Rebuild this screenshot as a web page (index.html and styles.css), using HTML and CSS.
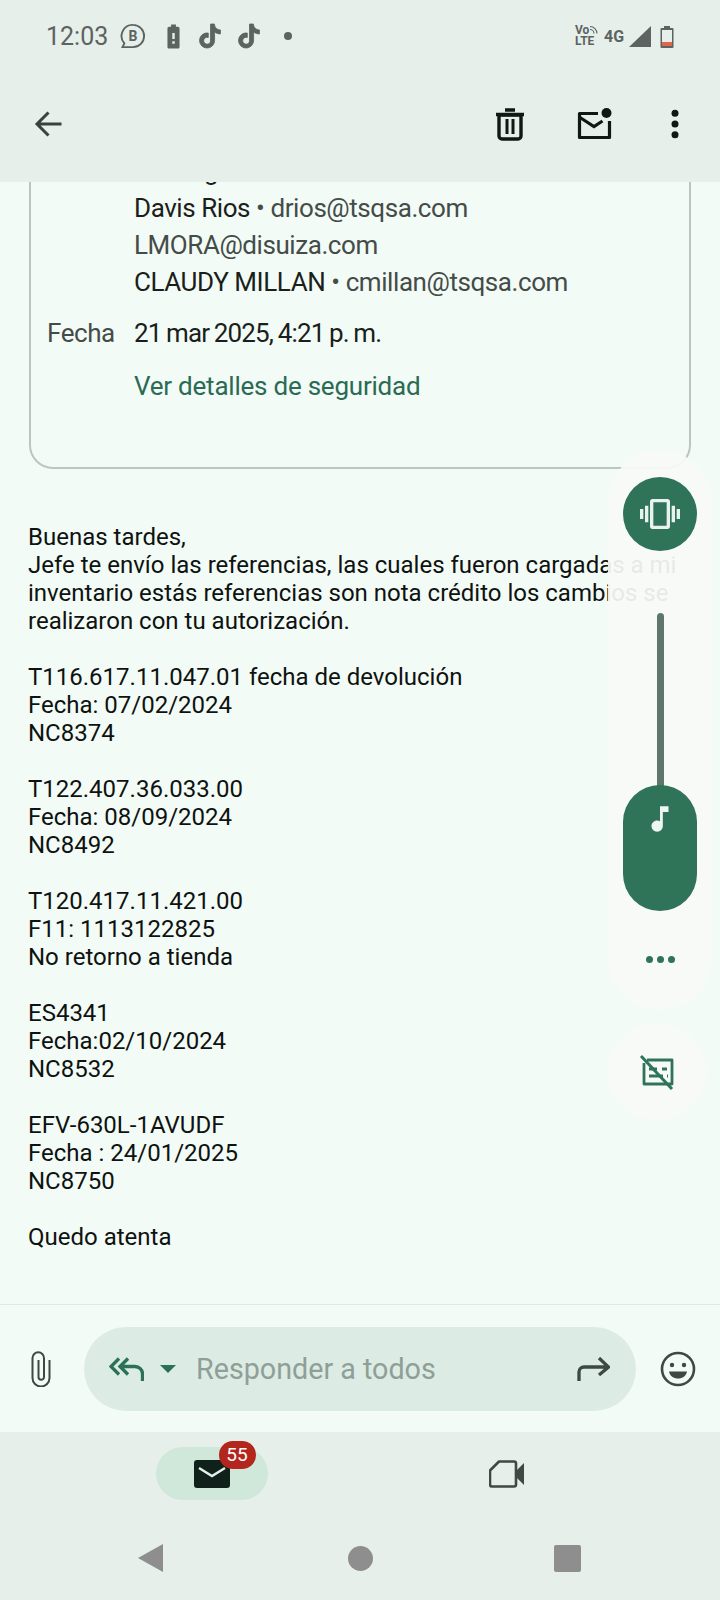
FILE: index.html
```html
<!DOCTYPE html>
<html lang="es">
<head>
    <meta charset="UTF-8">
    <meta name="viewport" content="width=device-width, initial-scale=1.0">
    <title>Correo</title>
    <link rel="stylesheet" href="styles.css">
</head>
<body>
    <div id="page">
        <div id="top">
            <div id="status">
                <span id="clock">12:03</span>
                <svg class="st-b" viewBox="0 0 24 24"><path d="M12 2.500a9.500 9.500 0 0 1 0 19H3l1.600-3.200A9.500 9.500 0 0 1 12 2.500z" fill="none" stroke="#5c6360" stroke-width="1.600"/><text x="12" y="16.500" text-anchor="middle" class="st-b-text">B</text></svg>
                <svg class="st-batt" viewBox="0 0 24 24"><path d="M15.670 4H14V2h-4v2H8.330C7.600 4 7 4.600 7 5.330v15.330C7 21.400 7.600 22 8.330 22h7.330c.74 0 1.340-.6 1.340-1.330V5.330C17 4.600 16.400 4 15.670 4zM13 18h-2v-2h2v2zm0-4h-2V9h2v5z"/></svg>
                <svg class="st-tt" viewBox="0 0 24 24"><path d="M12.525.02c1.310-.02 2.610-.01 3.910-.02.08 1.530.63 3.090 1.750 4.170 1.120 1.110 2.700 1.620 4.240 1.790v4.030c-1.440-.05-2.890-.35-4.200-.97-.57-.26-1.100-.59-1.620-.93-.01 2.920.01 5.840-.02 8.750-.08 1.400-.54 2.790-1.350 3.940-1.310 1.920-3.580 3.170-5.910 3.210-1.430.08-2.860-.31-4.080-1.030-2.020-1.190-3.440-3.370-3.650-5.710-.02-.5-.03-1-.01-1.490.18-1.900 1.120-3.720 2.580-4.960 1.660-1.440 3.980-2.130 6.150-1.720.02 1.480-.04 2.960-.04 4.440-.99-.32-2.150-.23-3.020.37-.63.41-1.110 1.040-1.360 1.750-.21.51-.15 1.070-.14 1.610.24 1.640 1.820 3.020 3.500 2.870 1.120-.01 2.190-.66 2.770-1.610.19-.33.4-.67.41-1.060.1-1.790.06-3.570.07-5.360.01-4.030-.01-8.050.02-12.070z"/></svg>
                <svg class="st-tt" viewBox="0 0 24 24"><path d="M12.525.02c1.310-.02 2.610-.01 3.910-.02.08 1.530.63 3.090 1.750 4.170 1.120 1.110 2.700 1.620 4.240 1.790v4.030c-1.440-.05-2.890-.35-4.200-.97-.57-.26-1.100-.59-1.620-.93-.01 2.920.01 5.840-.02 8.750-.08 1.400-.54 2.790-1.350 3.940-1.310 1.920-3.580 3.170-5.910 3.210-1.430.08-2.860-.31-4.080-1.030-2.020-1.190-3.440-3.370-3.650-5.710-.02-.5-.03-1-.01-1.490.18-1.900 1.120-3.720 2.580-4.960 1.660-1.440 3.980-2.130 6.150-1.720.02 1.480-.04 2.960-.04 4.440-.99-.32-2.150-.23-3.020.37-.63.41-1.110 1.040-1.360 1.750-.21.51-.15 1.070-.14 1.610.24 1.640 1.820 3.020 3.500 2.870 1.120-.01 2.190-.66 2.770-1.610.19-.33.4-.67.41-1.060.1-1.790.06-3.570.07-5.360.01-4.030-.01-8.050.02-12.070z"/></svg>
                <span id="st-dot"></span>
                <div id="status-right">
                    <div id="volte">
                        <span>Vo</span><span>LTE</span>
                        <svg id="volte-waves" viewBox="0 0 10 10"><path d="M1 1.500a7 7 0 0 1 7 7M1 4.500a4 4 0 0 1 4 4" fill="none" stroke="#5c6360" stroke-width="1.100"/></svg>
                    </div>
                    <span id="net">4G</span>
                    <svg id="signal" viewBox="0 0 22 21"><path d="M22 0v21H0z"/></svg>
                    <svg id="battery" viewBox="0 0 14 23"><path d="M4 1h6v2h2.500a1 1 0 0 1 1 1v18a1 1 0 0 1-1 1h-11a1 1 0 0 1-1-1V4a1 1 0 0 1 1-1H4z" fill="#5c6360"/><rect x="2" y="5" width="10" height="12" fill="#e7efeb"/><rect x="2" y="17" width="10" height="4" fill="#e2664a"/></svg>
                </div>
            </div>
            <div id="appbar">
                <svg id="back" viewBox="0 0 28 28"><path d="M27 14H3M14 2.500 2.500 14 14 25.500" fill="none" stroke="#38423f" stroke-width="3"/></svg>
                <div id="actions">
                    <svg class="act act-del" viewBox="0 0 42 42"><path d="M10 12h22v21a3 3 0 0 1-3 3H13a3 3 0 0 1-3-3z" fill="none" stroke="#111715" stroke-width="3.400"/><path d="M7 11.500h28M16 7h10" fill="none" stroke="#111715" stroke-width="3.400"/><path d="M16.500 16h3v15h-3zM22.500 16h3v15h-3z"/></svg>
                    <svg class="act" viewBox="0 0 42 42"><path d="M25 10.500H6.500v24h30V18" fill="none" stroke="#111715" stroke-width="3.200" stroke-linejoin="round"/><path d="m7 14.500 14 9 8.500-5.500" fill="none" stroke="#111715" stroke-width="3.200"/><circle cx="33.500" cy="10" r="5"/></svg>
                    <svg class="act" viewBox="0 0 24 24"><circle cx="12" cy="5.800" r="2"/><circle cx="12" cy="12" r="2"/><circle cx="12" cy="18.200" r="2"/></svg>
                </div>
            </div>
        </div>

        <div id="mail">
            <div id="card">
                <div class="row cut"><span class="value">g</span></div>
                <div class="row"><span class="value">Davis Rios <span class="sub">• drios@tsqsa.com</span></span></div>
                <div class="row"><span class="value sub">LMORA@disuiza.com</span></div>
                <div class="row"><span class="value">CLAUDY MILLAN <span class="sub">• cmillan@tsqsa.com</span></span></div>
                <div class="row date"><span class="label">Fecha</span><span class="value when">21 mar 2025, 4:21 p. m.</span></div>
                <div class="row sec"><span class="value link">Ver detalles de seguridad</span></div>
            </div>
            <div id="body">
                <p>Buenas tardes,<br>Jefe te envío las referencias, las cuales fueron cargadas a mi<br>inventario estás referencias son nota crédito los cambios se<br>realizaron con tu autorización.</p>
                <p>T116.617.11.047.01 fecha de devolución<br>Fecha: 07/02/2024<br>NC8374</p>
                <p>T122.407.36.033.00<br>Fecha: 08/09/2024<br>NC8492</p>
                <p>T120.417.11.421.00<br>F11: 1113122825<br>No retorno a tienda</p>
                <p>ES4341<br>Fecha:02/10/2024<br>NC8532</p>
                <p>EFV-630L-1AVUDF<br>Fecha : 24/01/2025<br>NC8750</p>
                <p>Quedo atenta</p>
            </div>
        </div>

        <div id="compose">
            <svg id="attach" viewBox="0 0 20 36"><path d="M18.500 9v18a8.500 8.500 0 0 1-17 0V7a5.750 5.750 0 0 1 11.500 0v19a2.750 2.750 0 0 1-5.500 0V9" fill="none" stroke="#3e4845" stroke-width="2"/></svg>
            <div id="reply">
                <svg id="reply-all" viewBox="0 0 35 24"><path d="M10 1.500 2 9.500l8 8M19 1.500l-8 8 8 8M11 9.500h15a7.500 7.500 0 0 1 7.500 7.500v7" fill="none" stroke="#2a7155" stroke-width="3.300"/></svg>
                <span id="caret"></span>
                <span id="placeholder">Responder a todos</span>
                <svg id="forward" viewBox="0 0 33 24"><path d="M2 24v-9a5 5 0 0 1 5-5h24M22 1l9.500 9-9.500 8" fill="none" stroke="#3e4845" stroke-width="3.300"/></svg>
            </div>
            <svg id="emoji" viewBox="0 0 36 36"><circle cx="18" cy="18" r="16" fill="none" stroke="#3e4845" stroke-width="2.600"/><circle cx="12" cy="14" r="2.200" fill="#3e4845"/><circle cx="24" cy="14" r="2.200" fill="#3e4845"/><path d="M9 20.500h18c-.8 4.500-4.500 7-9 7s-8.200-2.500-9-7z" fill="#3e4845"/></svg>
        </div>

        <div id="nav">
            <div id="tabs">
                <div class="tab">
                    <div id="mail-pill">
                        <svg id="mail-ico" viewBox="0 0 36 28"><rect width="36" height="28" rx="3" fill="#0f211a"/><path d="m5 8 13 8 13-8" fill="none" stroke="#e4f0ea" stroke-width="2.400"/></svg>
                        <span id="badge">55</span>
                    </div>
                </div>
                <div class="tab">
                    <svg id="video" viewBox="0 0 36 28"><path d="M10 1.500h15a2 2 0 0 1 2 2v21a2 2 0 0 1-2 2H3a2 2 0 0 1-2-2V10.500z" fill="none" stroke="#3e4845" stroke-width="2.600" stroke-linejoin="round"/><path d="M27 11 35 3v22l-8-8z" fill="#3e4845"/></svg>
                </div>
            </div>
            <div id="sysnav">
                <span id="sys-back"></span>
                <span id="sys-home"></span>
                <span id="sys-recent"></span>
            </div>
        </div>

        <!-- panel de volumen, va encima del correo -->
        <div id="volume">
            <div id="ring">
                <svg viewBox="0 0 24 24"><path d="M0 15h2V9H0v6zm3 2h2V7H3v10zm19-8v6h2V9h-2zm-3 8h2V7h-2v10zM16.500 3h-9C6.670 3 6 3.670 6 4.500v15c0 .83.67 1.500 1.500 1.500h9c.83 0 1.500-.67 1.500-1.500v-15c0-.83-.67-1.500-1.500-1.500zM16 19H8V5h8v14z"/></svg>
            </div>
            <div id="track"></div>
            <div id="thumb">
                <svg viewBox="0 0 24 24"><path d="M12 3v10.550c-.59-.34-1.270-.55-2-.55-2.210 0-4 1.790-4 4s1.790 4 4 4 4-1.790 4-4V7h4V3h-6z"/></svg>
            </div>
            <div id="more"><span></span><span></span><span></span></div>
        </div>
        <div id="captions">
            <svg viewBox="0 0 38 36"><path d="M9 6h25v24H6V9" fill="none" stroke="#2f7459" stroke-width="2.800" stroke-linejoin="round"/><path d="M11 15h8M24 15h5M11 22h14M29 22h1" stroke="#2f7459" stroke-width="2.800"/><path d="m3 2 31 33" stroke="#2f7459" stroke-width="3"/></svg>
        </div>
    </div>
</body>
</html>
```

FILE: styles.css
```css
* {
    box-sizing: border-box;
}

body {
    padding: 0;
    margin: 0;
    background-color: #f3fbf6;
    font-family: Roboto, sans-serif;
}

#page {
    position: relative;
    display: flex;
    flex-direction: column;
    width: 720px;
    height: 1600px;
    overflow: hidden;
}

/* barra de arriba */
#top {
    flex: none;
    height: 182px;
    background-color: #e7efeb;
}

#status {
    display: flex;
    align-items: center;
    height: 72px;
    padding-left: 46px;
    padding-right: 46px;
    color: #5c6360;
}

#status svg {
    flex: none;
    fill: #5c6360;
}

#clock {
    font-size: 25px;
    width: 73px;
}

.st-b {
    width: 28px;
    height: 28px;
    margin-right: 12px;
}

.st-b-text {
    font-size: 12px;
    font-weight: 700;
    stroke: none;
}

.st-batt {
    width: 29px;
    height: 29px;
    margin-right: 10px;
}

.st-tt {
    width: 24px;
    height: 26px;
    margin-right: 15px;
    stroke: #5c6360;
    stroke-width: 0.8;
}

#st-dot {
    width: 8px;
    height: 8px;
    margin-left: 8px;
    border-radius: 50%;
    background-color: #5c6360;
}

#status-right {
    display: flex;
    align-items: center;
    margin-left: auto;
}

#volte {
    position: relative;
    display: flex;
    flex-direction: column;
    width: 29px;
    font-size: 12px;
    font-weight: 700;
    line-height: 11px;
}

#volte-waves {
    position: absolute;
    top: 0;
    left: 14px;
    width: 10px;
    height: 10px;
}

#net {
    width: 25px;
    font-size: 16px;
    font-weight: 700;
}

#signal {
    width: 22px;
    height: 21px;
    margin-right: 9px;
}

#battery {
    width: 14px;
    height: 23px;
}

#appbar {
    display: flex;
    align-items: center;
    justify-content: space-between;
    height: 104px;
    padding-left: 34px;
    padding-right: 24px;
}

#back {
    width: 29px;
    height: 28px;
}

#actions {
    display: flex;
    gap: 39px;
}

.act {
    width: 42px;
    height: 42px;
    fill: #111715;
}

.act-del {
    margin-right: 3px;
}

/* correo */
#mail {
    flex: 1;
    min-height: 0;
    overflow: hidden;
}

#card {
    margin: -31px 29px 0;
    padding: 0 0 62px 16px;
    border: 2px solid #bcc5c0;
    border-radius: 0 0 24px 24px;
    font-size: 26px;
    line-height: 37px;
    letter-spacing: -0.43px;
}

.row {
    display: flex;
    padding-left: 87px;
    color: #1a1f1c;
}

.cut {
    padding-left: 157px;
}

.sub {
    color: #444c48;
}

.date {
    margin-top: 14px;
    padding-left: 0;
}

.label {
    width: 87px;
    color: #444c48;
}

.when {
    letter-spacing: -0.86px;
    word-spacing: -1px;
}

.sec {
    margin-top: 16px;
}

.link {
    color: #2a6b54;
    letter-spacing: -0.23px;
}

#body {
    margin-top: 54px;
    padding-left: 28px;
    font-size: 24px;
    line-height: 28px;
    color: #0e1210;
}

#body p {
    margin: 0 0 28px;
    white-space: nowrap;
}

/* responder */
#compose {
    flex: none;
    display: flex;
    align-items: center;
    height: 128px;
    padding-left: 31px;
    border-top: 1px solid #dfe8e3;
}

#attach {
    flex: none;
    width: 20px;
    height: 36px;
}

#reply {
    display: flex;
    align-items: center;
    flex: none;
    width: 552px;
    height: 84px;
    margin-left: 33px;
    margin-right: 24px;
    padding: 0 26px 0 25px;
    border-radius: 42px;
    background-color: #dcebe3;
}

#reply-all {
    flex: none;
    width: 35px;
    height: 24px;
}

#caret {
    flex: none;
    margin-left: 16px;
    border-top: 8px solid #2a7155;
    border-left: 8px solid transparent;
    border-right: 8px solid transparent;
}

#placeholder {
    flex: 1;
    margin-left: 20px;
    font-size: 28.7px;
    color: #8f9f98;
}

#forward {
    flex: none;
    width: 33px;
    height: 24px;
}

#emoji {
    flex: none;
    width: 36px;
    height: 36px;
}

/* abajo */
#nav {
    flex: none;
    height: 168px;
    background-color: #e7efeb;
}

#tabs {
    display: grid;
    grid-template-columns: 1fr 1fr;
    padding: 15px 66px 0 64px;
}

.tab {
    display: flex;
    justify-content: center;
    align-items: center;
    height: 53px;
}

#mail-pill {
    position: relative;
    display: flex;
    justify-content: center;
    align-items: center;
    width: 112px;
    height: 53px;
    border-radius: 27px;
    background-color: #d0e8da;
}

#mail-ico {
    width: 36px;
    height: 28px;
}

#video {
    width: 36px;
    height: 28px;
}

#badge {
    position: absolute;
    top: -6px;
    left: 63px;
    width: 37px;
    height: 28px;
    border-radius: 14px;
    background-color: #b3261e;
    color: #fff;
    font-size: 19px;
    line-height: 28px;
    text-align: center;
}

#sysnav {
    display: flex;
    align-items: center;
    height: 28px;
    margin-top: 44px;
    padding-left: 138px;
}

#sys-back {
    width: 0;
    height: 0;
    border-right: 25px solid #8e8e8e;
    border-top: 14px solid transparent;
    border-bottom: 14px solid transparent;
}

#sys-home {
    width: 25px;
    height: 25px;
    margin-left: 185px;
    border-radius: 50%;
    background-color: #8e8e8e;
}

#sys-recent {
    width: 27px;
    height: 27px;
    margin-left: 181px;
    border-radius: 2px;
    background-color: #8e8e8e;
}

/* panel de volumen */
#volume {
    position: absolute;
    top: 450px;
    left: 608px;
    display: flex;
    flex-direction: column;
    align-items: center;
    width: 104px;
    height: 560px;
    padding-top: 27px;
    border-radius: 52px;
    background-color: rgba(248, 250, 248, 0.93);
}

#ring {
    display: flex;
    justify-content: center;
    align-items: center;
    flex: none;
    width: 74px;
    height: 74px;
    border-radius: 50%;
    background-color: #2f7459;
}

#ring svg {
    width: 40px;
    height: 40px;
    fill: #e8f3ed;
}

#track {
    flex: none;
    width: 7px;
    height: 177px;
    margin-top: 62px;
    border-radius: 4px 4px 0 0;
    background-color: #5f766c;
}

#thumb {
    display: flex;
    justify-content: center;
    flex: none;
    width: 74px;
    height: 126px;
    margin-top: -5px;
    padding-top: 17px;
    border-radius: 37px;
    background-color: #2f7459;
}

#thumb svg {
    width: 34px;
    height: 34px;
    fill: #eef6f2;
}

#more {
    display: flex;
    gap: 4px;
    margin-top: 45px;
}

#more span {
    width: 7px;
    height: 7px;
    border-radius: 50%;
    background-color: #2f7459;
}

#captions {
    position: absolute;
    top: 1024px;
    left: 607px;
    display: flex;
    justify-content: center;
    align-items: center;
    width: 100px;
    height: 95px;
    border-radius: 48px;
    background-color: rgba(248, 250, 248, 0.93);
}

#captions svg {
    width: 38px;
    height: 36px;
}
```
